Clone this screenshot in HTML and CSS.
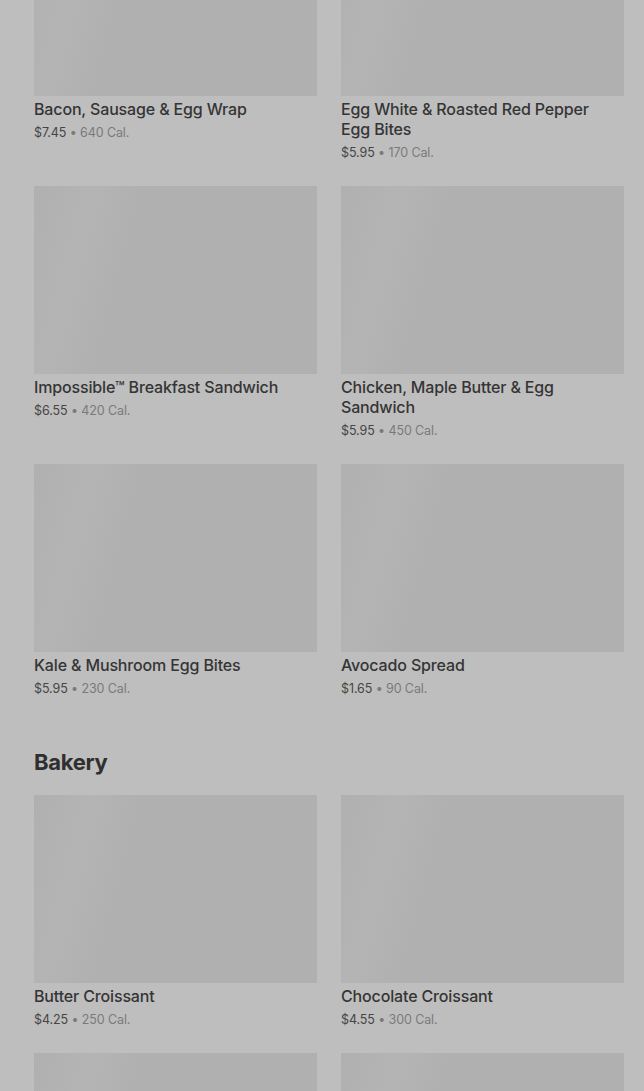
FILE: index.html
```html
<!DOCTYPE html>
<html>
<head>
<meta charset="utf-8">
<link rel="stylesheet" href="styles.css">
</head>
<body>
<main class="menu">
  <section class="section first">
    <div class="grid">
      <div class="item"><div class="thumb"></div><div class="name">Bacon, Sausage &amp; Egg Wrap</div><div class="meta"><span class="price">$7.45</span> • 640 Cal.</div></div>
      <div class="item"><div class="thumb"></div><div class="name">Egg White &amp; Roasted Red Pepper Egg Bites</div><div class="meta"><span class="price">$5.95</span> • 170 Cal.</div></div>
      <div class="item"><div class="thumb"></div><div class="name">Impossible™ Breakfast Sandwich</div><div class="meta"><span class="price">$6.55</span> • 420 Cal.</div></div>
      <div class="item"><div class="thumb"></div><div class="name">Chicken, Maple Butter &amp; Egg Sandwich</div><div class="meta"><span class="price">$5.95</span> • 450 Cal.</div></div>
      <div class="item"><div class="thumb"></div><div class="name">Kale &amp; Mushroom Egg Bites</div><div class="meta"><span class="price">$5.95</span> • 230 Cal.</div></div>
      <div class="item"><div class="thumb"></div><div class="name">Avocado Spread</div><div class="meta"><span class="price">$1.65</span> • 90 Cal.</div></div>
    </div>
  </section>
  <section class="section">
    <h2 class="heading">Bakery</h2>
    <div class="grid">
      <div class="item"><div class="thumb"></div><div class="name">Butter Croissant</div><div class="meta"><span class="price">$4.25</span> • 250 Cal.</div></div>
      <div class="item"><div class="thumb"></div><div class="name">Chocolate Croissant</div><div class="meta"><span class="price">$4.55</span> • 300 Cal.</div></div>
      <div class="item"><div class="thumb"></div></div>
      <div class="item"><div class="thumb"></div></div>
    </div>
  </section>
</main>
</body>
</html>
```
FILE: styles.css
```css
html, body {
  margin: 0;
  padding: 0;
  background: #bebebe;
  overflow: hidden;
}
body {
  font-family: Inter, "Noto Sans", sans-serif;
  color: #333;
}
.menu {
  padding: 0 20px 0 34px;
}
.section.first {
  margin-top: -92px;
}
.section + .section {
  margin-top: 47px;
}
.heading {
  margin: 0 0 17px;
  font-size: 22px;
  line-height: 32px;
  font-weight: 700;
  color: #2f2f2f;
  letter-spacing: -0.3px;
}
.grid {
  display: grid;
  grid-template-columns: 1fr 1fr;
  column-gap: 24px;
  row-gap: 23px;
}
.thumb {
  height: 188px;
  background: linear-gradient(105deg, #b0b0b0 0%, #b4b4b4 18%, #b0b0b0 34%, #b0b0b0 100%);
}
.name {
  margin-top: 3px;
  padding-right: 12px;
  font-size: 16px;
  line-height: 20px;
  font-weight: 500;
  color: #353535;
  letter-spacing: -0.15px;
}
.meta {
  margin-top: 4px;
  font-size: 12.5px;
  line-height: 20px;
  color: #7a7a7a;
  letter-spacing: -0.1px;
}
.price {
  color: #454545;
}
```
